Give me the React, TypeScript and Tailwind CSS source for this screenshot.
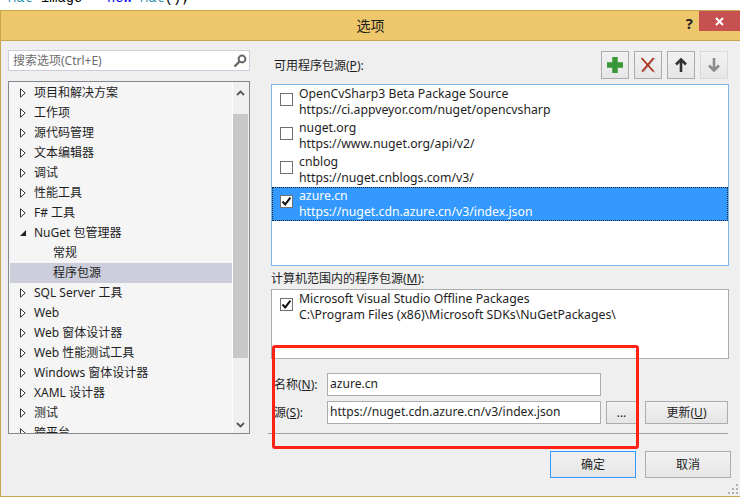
import React from 'react';

const FONT = '"Noto Sans", "Noto Sans CJK SC", sans-serif';

type TreeItem = { label: string; arrow?: 'closed' | 'open'; child?: boolean; selected?: boolean };

const treeItems: TreeItem[] = [
  { label: '项目和解决方案', arrow: 'closed' },
  { label: '工作项', arrow: 'closed' },
  { label: '源代码管理', arrow: 'closed' },
  { label: '文本编辑器', arrow: 'closed' },
  { label: '调试', arrow: 'closed' },
  { label: '性能工具', arrow: 'closed' },
  { label: 'F# 工具', arrow: 'closed' },
  { label: 'NuGet 包管理器', arrow: 'open' },
  { label: '常规', child: true },
  { label: '程序包源', child: true, selected: true },
  { label: 'SQL Server 工具', arrow: 'closed' },
  { label: 'Web', arrow: 'closed' },
  { label: 'Web 窗体设计器', arrow: 'closed' },
  { label: 'Web 性能测试工具', arrow: 'closed' },
  { label: 'Windows 窗体设计器', arrow: 'closed' },
  { label: 'XAML 设计器', arrow: 'closed' },
  { label: '测试', arrow: 'closed' },
  { label: '跨平台', arrow: 'closed' },
];

function Arrow({ kind }: { kind?: 'closed' | 'open' }) {
  if (kind === 'closed')
    return (
      <svg width="6" height="10" viewBox="0 0 6 10" className="ml-[10px] mr-[8px] shrink-0">
        <path d="M0.5 0.8 L5.2 5 L0.5 9.2 Z" fill="white" stroke="#333" strokeWidth="1" />
      </svg>
    );
  if (kind === 'open')
    return (
      <svg width="6" height="10" viewBox="0 0 6 10" className="ml-[10px] mr-[8px] shrink-0">
        <path d="M0 8 L6 8 L6 2 Z" fill="#222" />
      </svg>
    );
  return <span className="ml-[33px]" />;
}

function Check({ checked }: { checked?: boolean }) {
  return (
    <span className="w-[13px] h-[13px] mb-[5px] shrink-0 border border-[#707070] bg-white flex items-center justify-center">
      {checked && (
        <svg width="11" height="11" viewBox="0 0 11 11">
          <path d="M1.5 5.5 L4.2 8.4 L9.4 1.6" fill="none" stroke="#111" strokeWidth="2" />
        </svg>
      )}
    </span>
  );
}

function SourceRow({ name, url, checked, selected }: { name: string; url: string; checked?: boolean; selected?: boolean }) {
  return (
    <div
      className={`h-[34px] flex items-center pl-[8px] ${
        selected ? 'bg-[#3399ff] text-white outline-1 outline-dotted outline-offset-[-1px] outline-[#123]' : 'text-[#1e1e1e]'
      }`}
    >
      <Check checked={checked} />
      <div className="ml-[6px] leading-[16px] text-[12.25px] whitespace-nowrap">
        <div>{name}</div>
        <div>{url}</div>
      </div>
    </div>
  );
}

function ToolButton({ children, disabled }: { children: React.ReactNode; disabled?: boolean }) {
  return (
    <div
      className={`w-[28px] h-[28px] border flex items-center justify-center bg-gradient-to-b from-[#f2f2f2] to-[#e6e6e6] ${
        disabled ? 'border-[#d9d9d9]' : 'border-[#acacac]'
      }`}
    >
      {children}
    </div>
  );
}

function DialogButton({ children, className }: { children: React.ReactNode; className: string }) {
  return (
    <div className={`flex items-center justify-center border bg-gradient-to-b from-[#f2f2f2] to-[#e5e5e5] text-[#1e1e1e] ${className}`}>
      {children}
    </div>
  );
}

function TextBox({ value }: { value: string }) {
  return (
    <div className="w-[274px] h-[23px] border border-[#acacac] bg-white flex items-center pl-[2px] text-[12.1px] text-[#1e1e1e] whitespace-nowrap">
      {value}
    </div>
  );
}

export default function App() {
  return (
    <div className="relative w-[740px] h-[497px] overflow-hidden bg-white text-[12px]" style={{ fontFamily: FONT }}>
      {/* code editor peeking above the dialog */}
      <div className="h-[10px] overflow-hidden pl-[8px]">
        <div className="mt-[-11px] h-[20px] leading-[20px] text-[13.75px] whitespace-pre text-black" style={{ fontFamily: '"Liberation Mono", monospace' }}>
          <span className="text-[#2b91af]">Mat</span> image = <span className="text-[#0000ff]">new</span> <span className="text-[#2b91af]">Mat</span>();
        </div>
      </div>

      <div className="h-[487px] border border-r-0 border-[#c8a650] bg-[#efefef] flex flex-col">
        {/* title bar */}
        <div className="h-[30px] shrink-0 bg-[#eec76a] border-b border-[#c8a650] flex items-start relative">
          <div className="w-full text-center text-[14px] leading-[29px] text-[#1e1e1e]">选项</div>
          <div className="absolute right-[47px] top-[2px] text-[15px] font-bold leading-[20px] text-[#222]">?</div>
          <div className="absolute right-0 top-0 w-[41px] h-[20px] bg-[#c75050] flex items-center justify-center">
            <svg width="9" height="9" viewBox="0 0 9 9">
              <path d="M1 1 L8 8 M8 1 L1 8" stroke="white" strokeWidth="2" />
            </svg>
          </div>
        </div>

        <div className="flex flex-1 pt-[9px] pl-[7px]">
          {/* left column */}
          <div className="w-[242px] shrink-0 flex flex-col">
            <div className="h-[21px] border border-[#cccedb] bg-white flex items-center justify-between pl-[4px] pr-[2px] text-[#6d6d6d]">
              <span>搜索选项(Ctrl+E)</span>
              <svg width="14" height="14" viewBox="0 0 14 14">
                <circle cx="9" cy="5" r="3.4" fill="none" stroke="#666" strokeWidth="2" />
                <path d="M6.5 7.5 L1.5 12.5" stroke="#666" strokeWidth="2.4" />
              </svg>
            </div>
            <div className="mt-[10px] h-[353px] border border-[#828790] bg-[#f5f5f5] flex overflow-hidden">
              <div className="flex-1 pl-px pt-px overflow-hidden text-[#1e1e1e]">
                {treeItems.map((item) => (
                  <div key={item.label} className={`h-[20px] shrink-0 flex items-center whitespace-nowrap ${item.selected ? 'bg-[#cccedb]' : ''}`}>
                    <Arrow kind={item.arrow} />
                    {item.child ? <span className="ml-[10px]">{item.label}</span> : <span>{item.label}</span>}
                  </div>
                ))}
              </div>
              <div className="w-[17px] shrink-0 bg-[#f0f0f0] border-l border-white flex flex-col items-center pr-px">
                <svg width="9" height="6" viewBox="0 0 9 6" className="mt-[8px] shrink-0">
                  <path d="M1 5 L4.5 1.5 L8 5" fill="none" stroke="#555" strokeWidth="1.8" />
                </svg>
                <div className="mt-[18px] w-[15px] h-[244px] shrink-0 bg-[#c8c8c8]" />
                <svg width="9" height="6" viewBox="0 0 9 6" className="mt-[64px] shrink-0">
                  <path d="M1 1 L4.5 4.5 L8 1" fill="none" stroke="#555" strokeWidth="1.8" />
                </svg>
              </div>
            </div>
          </div>

          {/* right column */}
          <div className="ml-[21px] mt-px w-[458px] shrink-0 flex flex-col text-[#1e1e1e]">
            <div className="h-[28px] flex items-center justify-between">
              <span className="ml-[3px] mt-[2px]">可用程序包源(<u>P</u>):</span>
              <div className="flex gap-[5px] mr-px">
                <ToolButton>
                  <svg width="16" height="16" viewBox="0 0 16 16">
                    <path d="M8 0 V16 M0 8 H16" stroke="#399639" strokeWidth="5.5" />
                  </svg>
                </ToolButton>
                <ToolButton>
                  <svg width="16" height="16" viewBox="0 0 16 16">
                    <path d="M15 1 L3.5 15" stroke="#999" strokeWidth="1" />
                    <path d="M2 1 L15 15.5" stroke="#999" strokeWidth="1" />
                    <path d="M1.5 1 L13.5 14.5 M13.5 1 L2 14.5" stroke="#b0301a" strokeWidth="1.7" />
                  </svg>
                </ToolButton>
                <ToolButton>
                  <svg width="12" height="14" viewBox="0 0 12 14">
                    <path d="M6 1 V14 M1 6.5 L6 1.5 L11 6.5" fill="none" stroke="#333" strokeWidth="2.6" />
                  </svg>
                </ToolButton>
                <ToolButton disabled>
                  <svg width="12" height="14" viewBox="0 0 12 14">
                    <path d="M6 0 V13 M1 7.5 L6 12.5 L11 7.5" fill="none" stroke="#8c8c8c" strokeWidth="2.6" />
                  </svg>
                </ToolButton>
              </div>
            </div>

            <div className="mt-[5px] h-[182px] border border-[#7db4ea] bg-white">
              <SourceRow name="OpenCvSharp3 Beta Package Source" url="https://ci.appveyor.com/nuget/opencvsharp" />
              <SourceRow name="nuget.org" url="https://www.nuget.org/api/v2/" />
              <SourceRow name="cnblog" url="https://nuget.cnblogs.com/v3/" />
              <SourceRow name="azure.cn" url="https://nuget.cdn.azure.cn/v3/index.json" checked selected />
            </div>

            <div className="mt-[4px] h-[18px] leading-[18px]">计算机范围内的程序包源(<u>M</u>):</div>
            <div className="mt-px h-[70px] border border-[#acacac] bg-white">
              <SourceRow name="Microsoft Visual Studio Offline Packages" url="C:\Program Files (x86)\Microsoft SDKs\NuGetPackages\" checked />
            </div>

            <div className="mt-[14px] flex items-center">
              <span className="w-[56px] ml-[3px] mr-[-3px]">名称(<u>N</u>):</span>
              <TextBox value="azure.cn" />
            </div>
            <div className="mt-[5px] flex items-center">
              <span className="w-[56px] ml-[3px] mr-[-3px]">源(<u>S</u>):</span>
              <TextBox value="https://nuget.cdn.azure.cn/v3/index.json" />
              <DialogButton className="ml-[5px] w-[31px] h-[23px] border-[#acacac]">...</DialogButton>
              <DialogButton className="ml-[8px] w-[83px] h-[23px] border-[#acacac]">更新(<u>U</u>)</DialogButton>
            </div>
            <div className="mt-[9px] ml-[-3px] mr-px h-px bg-[#a0a0a0]" />
            <div className="mt-[17px] flex justify-end gap-[9px] mr-[-2px]">
              <DialogButton className="w-[86px] h-[27px] border-[#3399ff]">确定</DialogButton>
              <DialogButton className="w-[86px] h-[27px] border-[#acacac]">取消</DialogButton>
            </div>
          </div>
        </div>
      </div>

      {/* red annotation drawn over the screenshot */}
      <div className="absolute left-[272px] top-[345px] w-[367px] h-[104px] border-[3px] border-[#ff2016] rounded-[3px]" />

      {/* resize grip */}
      <svg width="10" height="10" viewBox="0 0 10 10" className="absolute right-[2px] bottom-[3px]">
        <path d="M8 0h2v2H8zM4 4h2v2H4zM8 4h2v2H8zM0 8h2v2H0zM4 8h2v2H4zM8 8h2v2H8z" fill="#b0b0b0" />
      </svg>
    </div>
  );
}
